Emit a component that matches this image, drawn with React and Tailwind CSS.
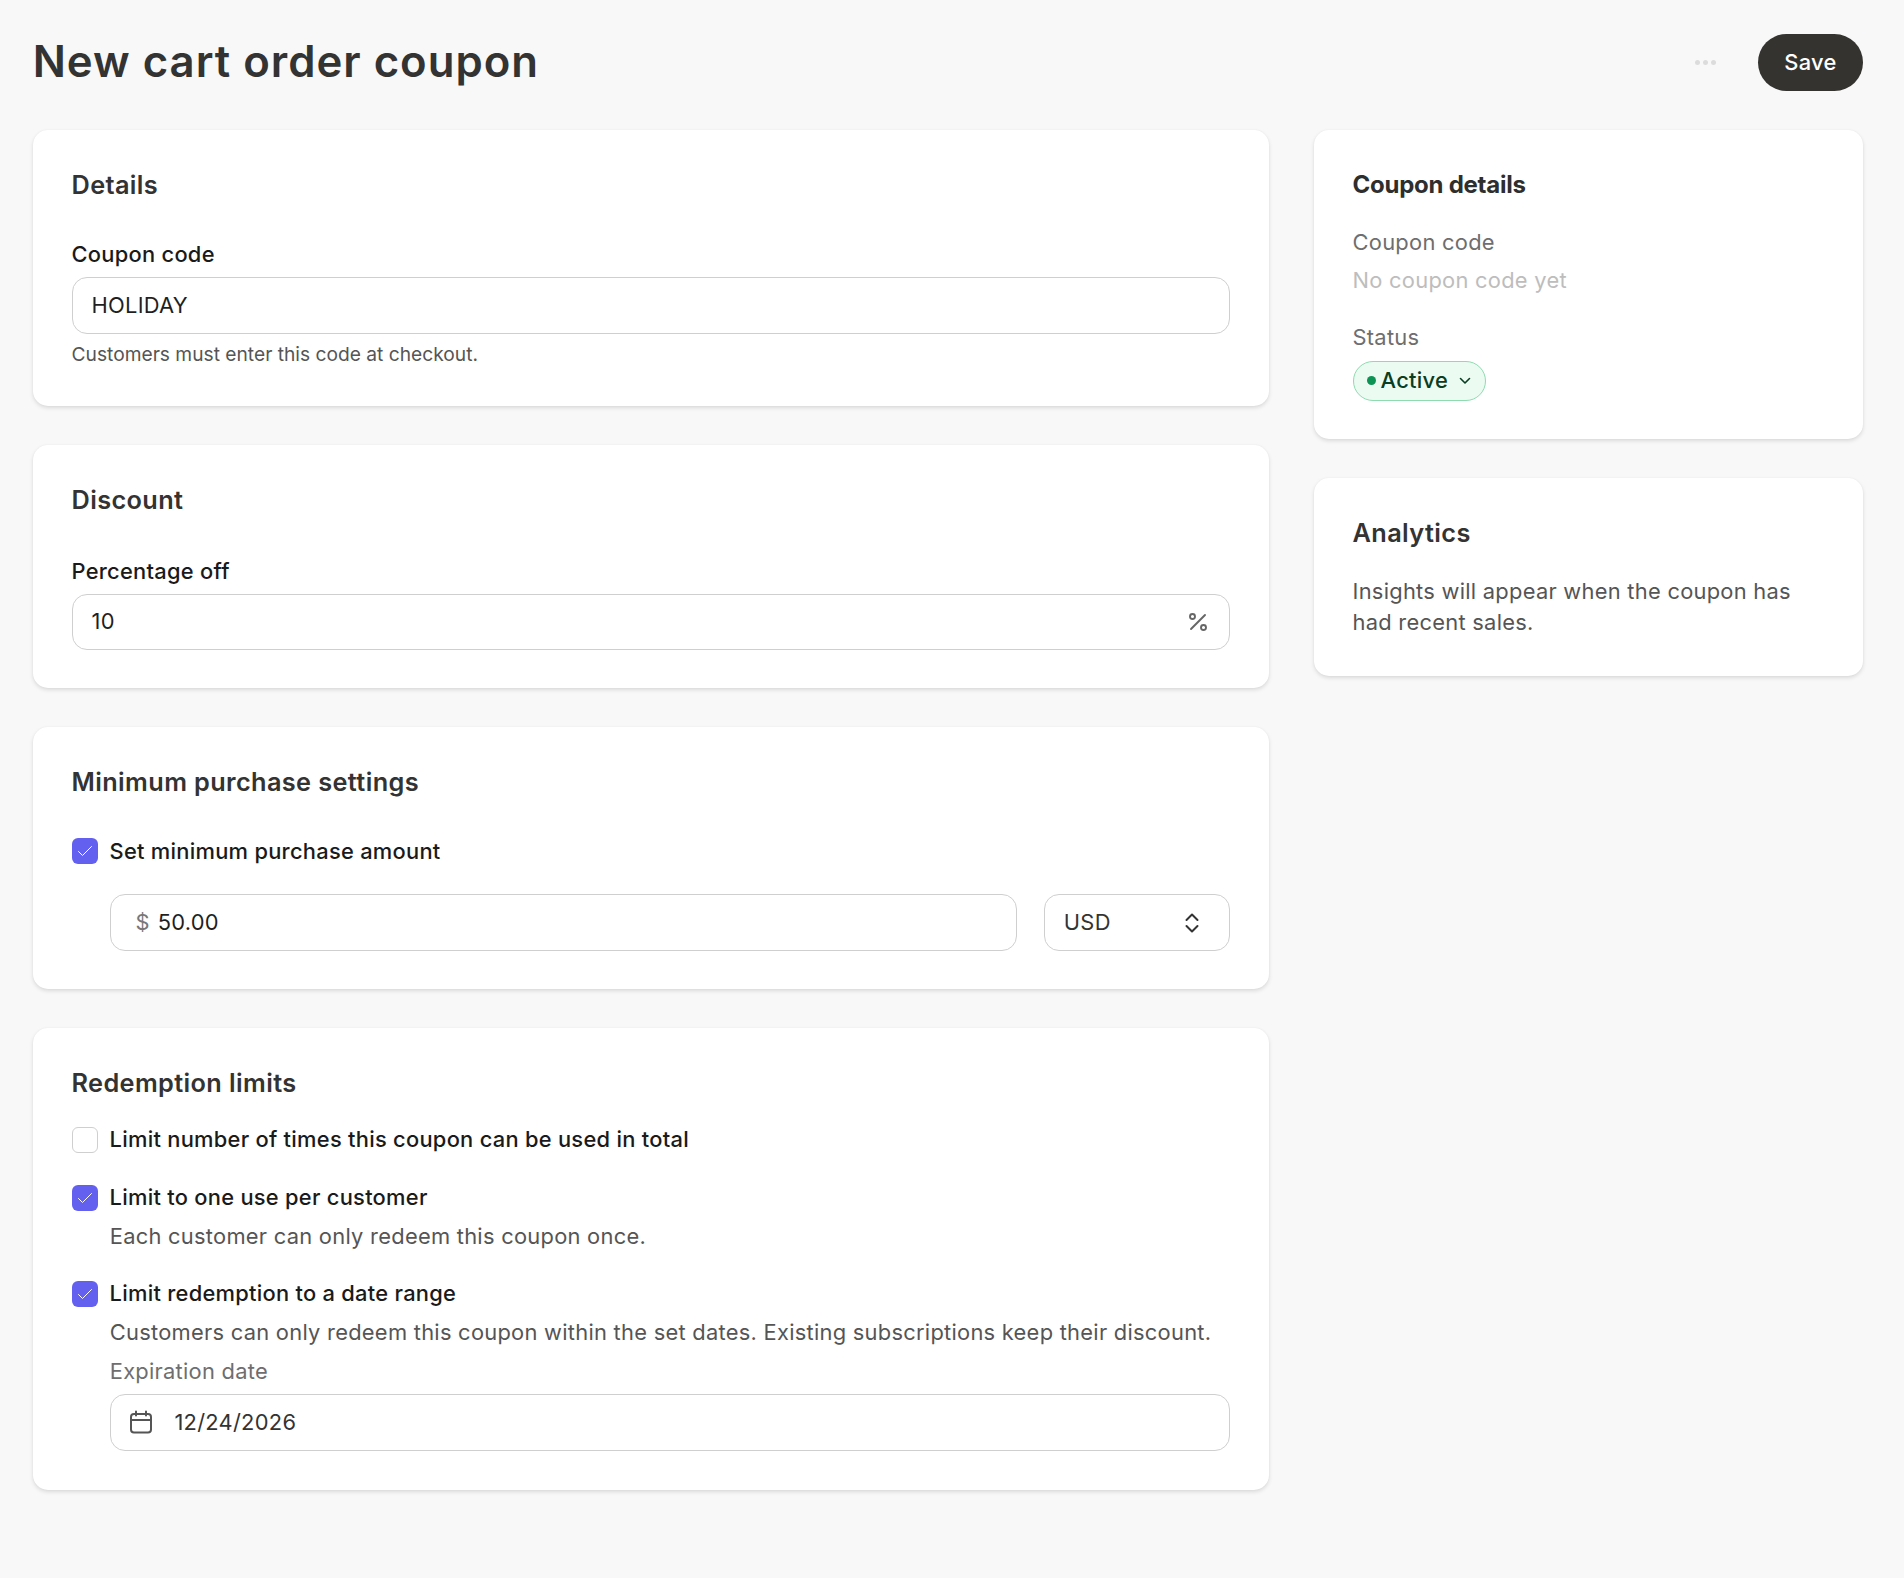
import React from "react";
import { Percent } from "lucide-react";

function Card({ title, children, className = "" }) {
    return (
        <div className={`bg-white rounded-[15px] shadow-[0_2px_4px_rgba(0,0,0,0.12),0_0_2px_rgba(0,0,0,0.04)] p-[38.86px] ${className}`}>
            {title && <h2 className="h-[32px] leading-[32px] text-[25.3px] tracking-[0.38px] font-semibold text-[#333333]">{title}</h2>}
            {children}
        </div>
    );
}

function Checkbox({ checked }) {
    if (!checked) {
        return <span className="w-[26px] h-[26px] shrink-0 rounded-[6px] border border-[#cfcfcf] bg-white" />;
    }
    return (
        <span className="w-[26px] h-[26px] shrink-0 rounded-[6px] bg-[#6360f0] flex items-center justify-center">
            <svg width="16" height="16" viewBox="0 0 16 16" fill="none" stroke="#ffffff" strokeWidth="1" strokeLinecap="round" strokeLinejoin="round">
                <path d="M1.5 8.5 5.5 12.5 14.5 3.5" />
            </svg>
        </span>
    );
}

function CheckRow({ checked, label, className = "" }) {
    return (
        <div className={`flex items-center gap-[12px] h-[39px] ${className}`}>
            <Checkbox checked={checked} />
            <span className="font-medium text-[#1a1a1a]">{label}</span>
        </div>
    );
}

function Field({ children, className = "" }) {
    return (
        <div className={`h-[56.5px] flex items-center border border-[#cfcfcf] rounded-[15px] bg-white text-[#1f1f1f] ${className}`}>
            {children}
        </div>
    );
}

export default function App() {
    return (
        <div className="min-h-[1578px] bg-[#f8f8f8] pl-[32.7px] pr-[41px] pt-[34px] text-[21.86px] tracking-[0.27px] text-[#1a1a1a]" style={{ fontFamily: "Inter, sans-serif" }}>
            <div className="flex items-center justify-between h-[57px] mb-[39px]">
                <h1 className="pb-[2px] text-[43.7px] tracking-[1px] font-semibold text-[#333333]">New cart order coupon</h1>
                <div className="flex items-center gap-[42px]">
                    <div className="flex gap-[3px]">
                        <span className="w-[5px] h-[5px] rounded-full bg-[#dcdcdc]" />
                        <span className="w-[5px] h-[5px] rounded-full bg-[#dcdcdc]" />
                        <span className="w-[5px] h-[5px] rounded-full bg-[#dcdcdc]" />
                    </div>
                    <button className="w-[105px] h-[57px] rounded-full bg-[#343330] text-white font-medium">Save</button>
                </div>
            </div>

            <div className="flex gap-[44.5px] items-start">
                <div className="w-[1236.5px] flex flex-col gap-[38.86px]">
                    <Card title="Details" className="pb-[38px]">
                        <div className="mt-[38.5px] h-[30px] leading-[30px] font-medium">Coupon code</div>
                        <Field className="mt-[8px] pl-[19px]">HOLIDAY</Field>
                        <p className="mt-[7.5px] leading-[27px] text-[19.2px] tracking-normal text-[#555555]">Customers must enter this code at checkout.</p>
                    </Card>

                    <Card title="Discount" className="pb-[38px]">
                        <div className="mt-[39.5px] h-[30px] leading-[30px] font-medium">Percentage off</div>
                        <Field className="mt-[8px] pl-[19px] pr-[19px] justify-between">
                            <span>10</span>
                            <Percent size={24} strokeWidth={1.9} className="text-[#666666]" />
                        </Field>
                    </Card>

                    <Card title="Minimum purchase settings" className="pb-[38px]">
                        <CheckRow checked label="Set minimum purchase amount" className="mt-[34px]" />
                        <div className="ml-[38.86px] mt-[23.5px] flex gap-[26.7px]">
                            <Field className="flex-1 pl-[24px]">
                                <span className="text-[#777777] mr-[8px]">$</span>
                                50.00
                            </Field>
                            <Field className="w-[186.5px] pl-[19px] pr-[29px] justify-between text-[#333333]">
                                <span>USD</span>
                                <svg width="16" height="22" viewBox="0 0 16 22" fill="none" stroke="#333333" strokeWidth="2" strokeLinecap="round" strokeLinejoin="round">
                                    <path d="M2.5 8 8 2.5 13.5 8" />
                                    <path d="M2.5 14 8 19.5 13.5 14" />
                                </svg>
                            </Field>
                        </div>
                    </Card>

                    <Card title="Redemption limits">
                        <CheckRow label="Limit number of times this coupon can be used in total" className="mt-[21.5px]" />
                        <CheckRow checked label="Limit to one use per customer" className="mt-[19px]" />
                        <p className="ml-[38.2px] h-[39px] leading-[39px] text-[#555555]">Each customer can only redeem this coupon once.</p>
                        <CheckRow checked label="Limit redemption to a date range" className="mt-[18px]" />
                        <p className="ml-[38.2px] h-[39px] leading-[39px] text-[#555555]">Customers can only redeem this coupon within the set dates. Existing subscriptions keep their discount.</p>
                        <p className="ml-[38.2px] h-[39px] leading-[39px] text-[#6e6e6e]">Expiration date</p>
                        <Field className="ml-[38.86px] mt-[2.5px] h-[57.5px] pl-[18px] text-[#333333]">
                            <svg width="24" height="24" viewBox="0 0 24 24" fill="none" stroke="#555555" strokeWidth="2" strokeLinecap="round" strokeLinejoin="round" className="mr-[21px]">
                                <rect x="2" y="4" width="20" height="18.5" rx="3" />
                                <path d="M7 1.5v4M17 1.5v4M2 10h20" />
                            </svg>
                            12/24/2026
                        </Field>
                    </Card>
                </div>

                <div className="flex-1 flex flex-col gap-[38.86px]">
                    <Card className="pb-[38px]">
                        <h2 className="h-[32px] leading-[32px] text-[24px] font-bold tracking-[-0.25px] text-[#2e2e2e]">Coupon details</h2>
                        <div className="mt-[22px] h-[39px] leading-[39px] text-[#6e6e6e]">Coupon code</div>
                        <div className="h-[37px] leading-[37px] text-[#bdbdbd]">No coupon code yet</div>
                        <div className="mt-[19px] h-[39px] leading-[39px] text-[#6e6e6e]">Status</div>
                        <div className="mt-[4px] inline-flex items-center h-[40px] w-[133px] pl-[13px] rounded-full border border-[#8edbb0] bg-[#ecfbf2] text-[#0a3d22] font-medium">
                            <span className="w-[9px] h-[9px] rounded-full bg-[#0d9455] mr-[5px]" />
                            Active
                            <svg width="12" height="8" viewBox="0 0 12 8" fill="none" stroke="#0a3d22" strokeWidth="1.6" strokeLinecap="round" strokeLinejoin="round" className="ml-[11px]">
                                <path d="M1.5 1.5 6 6l4.5-4.5" />
                            </svg>
                        </div>
                    </Card>
                    <Card title="Analytics" className="pb-[37px]">
                        <p className="mt-[27px] leading-[31.6px] text-[#555555]">Insights will appear when the coupon has had recent sales.</p>
                    </Card>
                </div>
            </div>
        </div>
    );
}
